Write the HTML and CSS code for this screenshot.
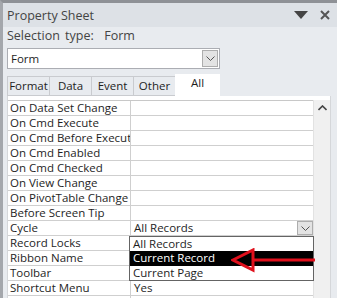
FILE: index.html
```html
<!DOCTYPE html>
<html lang="en">

<head>
    <meta charset="UTF-8">
    <title>Property Sheet</title>
    <link rel="stylesheet" href="styles.css">
</head>

<body>
    <div class="sheet">
        <header class="titlebar">
            <span class="title">Property Sheet</span>
            <span class="icons">
                <svg width="14" height="8" viewBox="0 0 14 8"><path d="M0 0 H14 L7 8 Z" fill="#444"/></svg>
                <svg width="10" height="10" viewBox="0 0 10 10"><path d="M1 1 L9 9 M9 1 L1 9" stroke="#555" stroke-width="2"/></svg>
            </span>
        </header>

        <div class="seltype">Selection type:&nbsp;&nbsp;Form</div>

        <div class="combo">
            <span class="combotxt">Form</span>
            <span class="combobtn">
                <svg width="9" height="5" viewBox="0 0 9 5"><path d="M0.5 0.5 L4.5 4.5 L8.5 0.5" fill="none" stroke="#555"/></svg>
            </span>
        </div>

        <nav class="tabs">
            <span class="tab">Format</span>
            <span class="tab">Data</span>
            <span class="tab">Event</span>
            <span class="tab">Other</span>
            <span class="tab valgt">All</span>
        </nav>

        <section class="indhold">
            <div class="grid">
                <div class="row"><span class="lbl">On Data Set Change</span><span class="val"></span></div>
                <div class="row"><span class="lbl">On Cmd Execute</span><span class="val"></span></div>
                <div class="row"><span class="lbl">On Cmd Before Execute</span><span class="val"></span></div>
                <div class="row"><span class="lbl">On Cmd Enabled</span><span class="val"></span></div>
                <div class="row"><span class="lbl">On Cmd Checked</span><span class="val"></span></div>
                <div class="row"><span class="lbl">On View Change</span><span class="val"></span></div>
                <div class="row"><span class="lbl">On PivotTable Change</span><span class="val"></span></div>
                <div class="row"><span class="lbl">Before Screen Tip</span><span class="val"></span></div>
                <div class="row"><span class="lbl">Cycle</span><span class="val">All Records
                    <span class="cellbtn"><svg width="9" height="5" viewBox="0 0 9 5"><path d="M0.5 0.5 L4.5 4.5 L8.5 0.5" fill="none" stroke="#555"/></svg></span>
                </span></div>
                <div class="row"><span class="lbl">Record Locks</span><span class="val"></span></div>
                <div class="row"><span class="lbl">Ribbon Name</span><span class="val"></span></div>
                <div class="row"><span class="lbl">Toolbar</span><span class="val"></span></div>
                <div class="row"><span class="lbl">Shortcut Menu</span><span class="val">Yes</span></div>
                <div class="row"><span class="lbl"></span><span class="val"></span></div>

                <ul class="liste">
                    <li>All Records</li>
                    <li class="hl">Current Record</li>
                    <li>Current Page</li>
                </ul>
            </div>
            <div class="scrollbar">
                <svg width="9" height="6" viewBox="0 0 9 6"><path d="M0.5 5 L4.5 1 L8.5 5" fill="none" stroke="#444" stroke-width="1.6"/></svg>
            </div>
        </section>

        <svg class="pil" width="90" height="30" viewBox="0 0 90 30">
            <path d="M22 12 H84" stroke="#e0101c" stroke-width="3"/>
            <path d="M2 12 L22 2 L22 22 Z" fill="none" stroke="#e0101c" stroke-width="3" stroke-linejoin="miter"/>
        </svg>
    </div>
</body>

</html>
```

FILE: styles.css
```css
body {
    margin: 0;
    background: #e8ebef;
    font-family: "Open Sans", "Noto Sans", sans-serif;
    color: #1e1e1e;
}

.sheet {
    position: relative;
    width: 337px;
    height: 298px;
    overflow: hidden;
    border-top: 3px solid #8e9196;
    border-left: 3px solid #a4a7ac;
    box-sizing: border-box;
    background: #e8ebef;
}

.titlebar {
    display: flex;
    justify-content: space-between;
    align-items: center;
    height: 24px;
    padding: 0 7px 0 4px;
    background: #dde1e6;
}

.title {
    font-size: 12.5px;
    color: #444;
}

.icons {
    display: flex;
    align-items: center;
    gap: 12px;
}

.seltype {
    font-size: 12.5px;
    color: #444;
    padding: 0 0 0 4px;
    height: 21px;
    line-height: 17px;
    word-spacing: 2px;
}

.combo {
    display: flex;
    justify-content: space-between;
    align-items: center;
    margin-left: 4px;
    width: 213px;
    height: 21px;
    box-sizing: border-box;
    border: 1px solid #abadb3;
    background: #fff;
    font-size: 11.5px;
}

.combotxt {
    padding-left: 3px;
}

.combobtn {
    display: flex;
    align-items: center;
    justify-content: center;
    width: 16px;
    height: 17px;
    margin-right: 1px;
    background: #e3e3e3;
    border: 1px solid #adadad;
    box-sizing: border-box;
}

.tabs {
    display: flex;
    align-items: flex-end;
    margin: 6px 0 0 4px;
    height: 21px;
}

.tab {
    width: 42px;
    height: 20px;
    box-sizing: border-box;
    border: 1px solid #c9cbcf;
    border-right: none;
    font-size: 11.5px;
    text-align: center;
    line-height: 18px;
    background: #e8ebef;
}

.tab.valgt {
    width: 45px;
    height: 22px;
    background: #fff;
    border: none;
    line-height: 18px;
}

.indhold {
    display: flex;
    margin-left: 4px;
    width: 324px;
    height: 210px;
    background: #fff;
    border: 1px solid #d5d7da;
    border-top: none;
    box-sizing: border-box;
    padding-top: 4px;
}

.grid {
    position: relative;
    width: 306px;
    border-top: 1px solid #c8c8c8;
}

.row {
    display: flex;
    height: 15px;
    border-bottom: 1px solid #cfcfcf;
    box-sizing: border-box;
    font-size: 11.5px;
    line-height: 14px;
}

.lbl {
    width: 120px;
    padding-left: 2px;
    border-right: 1px solid #cfcfcf;
    white-space: nowrap;
    overflow: hidden;
}

.val {
    position: relative;
    flex: 1;
    padding-left: 3px;
}

.cellbtn {
    position: absolute;
    right: 0;
    top: 0;
    width: 16px;
    height: 14px;
    display: flex;
    align-items: center;
    justify-content: center;
    background: #e3e3e3;
    border: 1px solid #adadad;
    box-sizing: border-box;
}

.liste {
    position: absolute;
    left: 121px;
    top: 135px;
    width: 185px;
    margin: 0;
    padding: 0;
    list-style: none;
    background: #fff;
    border: 1px solid #646464;
    box-sizing: border-box;
    font-size: 11.5px;
}

.liste li {
    height: 14px;
    line-height: 14px;
    padding-left: 3px;
}

.liste .hl {
    height: 15px;
    background: #000;
    color: #fff;
}

.scrollbar {
    width: 17px;
    background: #f0f0f0;
    border-left: 1px solid #e2e2e2;
    display: flex;
    justify-content: center;
    padding-top: 5px;
    box-sizing: border-box;
}

.pil {
    position: absolute;
    left: 228px;
    top: 245px;
}
```
